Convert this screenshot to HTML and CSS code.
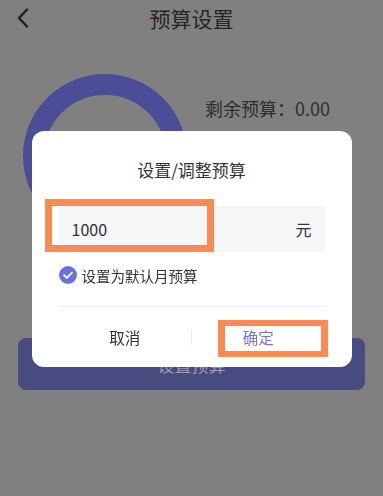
FILE: index.html
```html
<!DOCTYPE html>
<html lang="zh-CN">
<head>
    <meta charset="UTF-8">
    <meta name="viewport" content="width=device-width, initial-scale=1.0">
    <title>预算设置</title>
    <link rel="stylesheet" href="styles.css">
</head>
<body>
    <div class="page">
        <div class="header">
            <svg class="back" width="12" height="20" viewBox="0 0 12 20">
                <path d="M10 1.5 L2 10 L10 18.5" fill="none" stroke="#202020" stroke-width="2.4" stroke-linecap="round" stroke-linejoin="round"/>
            </svg>
            <span class="title">预算设置</span>
        </div>

        <div class="summary">
            <div class="ring"></div>
            <div class="remain">剩余预算：0.00</div>
        </div>

        <button class="main-btn">设置预算</button>
    </div>

    <div class="mask">
        <div class="dialog">
            <div class="dialog-title">设置/调整预算</div>

            <div class="amount">
                <span class="amount-value">1000</span>
                <span class="amount-unit">元</span>
            </div>

            <label class="check-row">
                <svg width="18" height="18" viewBox="0 0 18 18">
                    <circle cx="9" cy="9" r="9" fill="#6b70df"/>
                    <path d="M5 9.2 L7.8 12 L13 6.6" fill="none" stroke="#fff" stroke-width="1.8" stroke-linecap="round" stroke-linejoin="round"/>
                </svg>
                <span>设置为默认月预算</span>
            </label>

            <div class="actions">
                <button class="btn-cancel">取消</button>
                <span class="sep"></span>
                <button class="btn-ok">确定</button>
            </div>

            <!-- highlight boxes -->
            <div class="mark mark-input"></div>
            <div class="mark mark-ok"></div>
        </div>
    </div>
</body>
</html>
```

FILE: styles.css
```css
* {
    box-sizing: border-box;
}

body {
    margin: 0;
    width: 383px;
    height: 496px;
    overflow: hidden;
    background-color: #808080;
    font-family: "Noto Sans CJK SC", "Noto Sans", sans-serif;
    color: #2b2b2b;
}

.header {
    position: relative;
    height: 36px;
    display: flex;
    align-items: center;
    justify-content: center;
}

.back {
    position: absolute;
    left: 17px;
    top: 8px;
}

.title {
    font-size: 21px;
    line-height: 36px;
    color: #262626;
}

.summary {
    display: flex;
    align-items: flex-start;
    margin-top: 38px;
    padding-left: 23px;
}

.ring {
    width: 164px;
    height: 164px;
    border: 21px solid #4b4e96;
    border-radius: 50%;
}

.remain {
    margin-top: 22px;
    margin-left: 18px;
    font-size: 18px;
    line-height: 24px;
    color: #2e2e2e;
}

.main-btn {
    display: block;
    width: 347px;
    height: 52px;
    margin: 100px 0 0 18px;
    border: none;
    border-radius: 8px;
    background-color: #484b80;
    color: #9a9bb8;
    font-family: inherit;
    font-size: 17px;
}

.mask {
    position: fixed;
    top: 0;
    left: 0;
    right: 0;
    bottom: 0;
    display: flex;
    justify-content: center;
    align-items: flex-start;
    padding-top: 131px;
}

.dialog {
    position: relative;
    width: 320px;
    height: 236px;
    background-color: #fff;
    border-radius: 12px;
    padding: 27px 27px 0;
}

.dialog-title {
    text-align: center;
    font-size: 17px;
    line-height: 24px;
    color: #333;
}

.amount {
    display: flex;
    justify-content: space-between;
    align-items: center;
    height: 46px;
    margin-top: 24px;
    padding: 0 13px;
    background-color: #f5f6f8;
    font-size: 16px;
    color: #333;
}

.check-row {
    display: flex;
    align-items: center;
    gap: 5px;
    height: 22px;
    margin-top: 12px;
    font-size: 14.5px;
    color: #333;
}

.actions {
    display: flex;
    align-items: center;
    height: 60px;
    margin-top: 20px;
    border-top: 1px solid #ededed;
}

.actions button {
    flex: 1;
    height: 100%;
    border: none;
    background: none;
    font-family: inherit;
    font-size: 15.5px;
    padding: 0;
}

.btn-cancel {
    color: #333;
}

.btn-ok {
    color: #7478cf;
}

.sep {
    width: 1px;
    height: 16px;
    background-color: #f0f0f0;
}

.mark {
    position: absolute;
    border: 7px solid #fd8a52;
}

.mark-input {
    left: 13px;
    top: 68px;
    width: 169px;
    height: 53px;
}

.mark-ok {
    left: 186px;
    top: 189px;
    width: 110px;
    height: 37px;
    border-width: 6px 7px;
}
```
